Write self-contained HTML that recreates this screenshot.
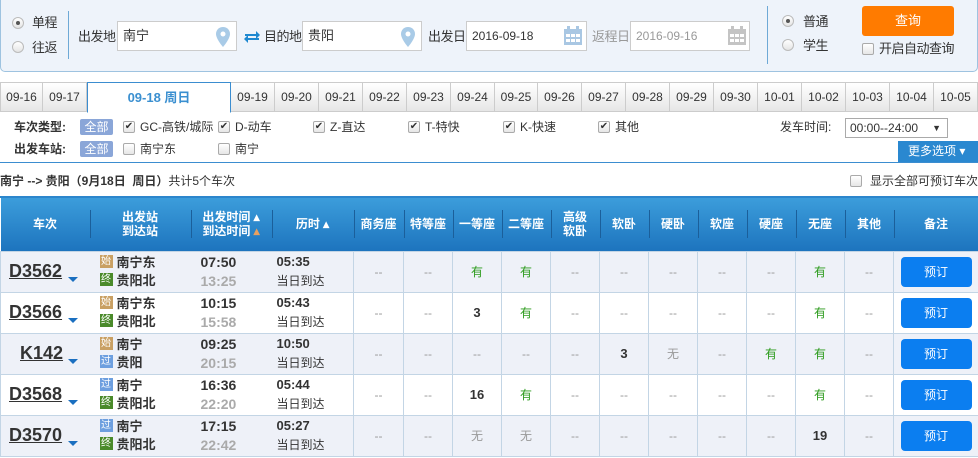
<!DOCTYPE html>
<html><head><meta charset="utf-8">
<style>
*{margin:0;padding:0;box-sizing:border-box}
body{width:978px;height:458px;overflow:hidden;background:#fff;font-family:"Liberation Sans","Noto Sans CJK SC",sans-serif;font-size:12px;color:#333;position:relative}
.a{position:absolute}
.top{left:0;top:0;width:978px;height:72px;background:#eef3fa;border:1px solid #9ec3e0;border-top:none;border-radius:0 0 5px 5px}
.radio{width:12px;height:12px;border-radius:50%;border:1px solid #bbb;background:linear-gradient(#fff,#e4e4e4)}
.radio.on::after{content:"";position:absolute;left:3px;top:3px;width:4px;height:4px;border-radius:50%;background:#555}
.inp{height:30px;border:1px solid #ccc;background:#fff;font-size:13px;line-height:28px;padding-left:5px}
.lbl{font-size:13px;color:#333;line-height:16px;letter-spacing:-0.5px}
.cb{width:12px;height:12px;border:1px solid #aaa;border-radius:2px;background:linear-gradient(#fff,#e6e6e6);font-size:10px;line-height:10px;text-align:center;color:#333}
.tabs{left:0;top:82px;height:30px;width:978px;border-bottom:1px solid #3b8dd0}
.tab{position:absolute;top:0;height:30px;border:1px solid #ccc;border-left:none;background:linear-gradient(#fff,#e6e6e6);font-size:12px;line-height:29px;text-align:center;color:#333}
.tab.act{background:#fff;border:1px solid #3b8dd0;border-bottom:1px solid #fff;height:31px;color:#3a8fd0;font-weight:bold;font-size:13px}
.badge{background:#8aa6d8;color:#fff;font-size:12px;width:33px;height:16px;line-height:16px;text-align:center;border-radius:2px}
.ft{font-size:12px;line-height:14px}
table{position:absolute;left:0;top:198px;width:978px;border-collapse:collapse;table-layout:fixed}
th{height:53px;background:linear-gradient(#3c9ddb,#1d74be);color:#fff;font-size:12px;font-weight:bold;line-height:14px;position:relative}
th+th::before{content:"";position:absolute;left:0;top:12px;height:28px;border-left:1px solid #1b5f9a}
td{height:41px;border:1px solid #c3d5e5;text-align:center;font-size:12px;color:#999}
td.n,td.st,td.tm{border-right:none}
td.st,td.tm,td.ls{border-left:none}
tr.b td{background:#eef1f8}
tr.w td{background:#fff}
td.n{text-align:left;padding-left:8px;position:relative}
.tn{font-size:18px;font-weight:bold;color:#333;text-decoration:underline;font-family:"Liberation Sans",sans-serif}
.arr{position:absolute;left:67px;top:25px;width:0;height:0;border-left:5px solid transparent;border-right:5px solid transparent;border-top:5px solid #1a6fc0}
.st{text-align:left;padding-left:10px;color:#333;font-weight:bold;font-size:13px;line-height:18px}
.ic{display:inline-block;width:13px;height:13px;font-size:10px;line-height:13px;text-align:center;color:#fff;margin-right:4px;vertical-align:-1px;font-weight:normal;overflow:hidden}
.s{background:#c9a063}.j{background:#4a8a2a}.g{background:#6d9fdf}
.tm{text-align:left;padding-left:10px;font-weight:bold;font-size:14px;line-height:19px;color:#333}
.tm span{color:#aaa;display:block}
.ls{text-align:left;padding-left:5px;font-size:12px;color:#333;line-height:19px}
.ls b{font-size:13px}
.y{color:#2a9a1a}
.k{color:#333;font-weight:bold;font-size:13px}
.btn{display:inline-block;width:71px;height:30px;background:#0b7ef0;border-radius:4px;color:#fff;line-height:30px;font-size:12px}
</style></head><body>
<div class="a top"></div>
<div class="a radio on" style="left:12px;top:17px"></div><div class="a lbl" style="left:32px;top:15px">单程</div>
<div class="a radio" style="left:12px;top:41px"></div><div class="a lbl" style="left:32px;top:40px">往返</div>
<div class="a" style="left:68px;top:11px;height:48px;border-left:1px solid #6ea9d6"></div>
<div class="a lbl" style="left:78px;top:29px">出发地</div>
<div class="a inp" style="left:117px;top:21px;width:120px">南宁</div>
<svg class="a" style="left:216px;top:27px" width="14" height="20" viewBox="0 0 14 20"><path d="M7 0C3 0 0 3 0 7c0 5 7 13 7 13s7-8 7-13C14 3 11 0 7 0z" fill="#a9cbe7"/><circle cx="7" cy="7" r="2.5" fill="#fff"/></svg>
<svg class="a" style="left:243px;top:29px" width="18" height="16" viewBox="0 0 18 16"><path d="M2 5h11V2l4 4-4 4V7H2z M16 11H5v3l-4-4 4-4v3h11z" fill="#1e88d0"/></svg>
<div class="a lbl" style="left:264px;top:29px">目的地</div>
<div class="a inp" style="left:302px;top:21px;width:120px">贵阳</div>
<svg class="a" style="left:401px;top:27px" width="14" height="20" viewBox="0 0 14 20"><path d="M7 0C3 0 0 3 0 7c0 5 7 13 7 13s7-8 7-13C14 3 11 0 7 0z" fill="#a9cbe7"/><circle cx="7" cy="7" r="2.5" fill="#fff"/></svg>
<div class="a lbl" style="left:428px;top:29px">出发日</div>
<div class="a inp" style="left:466px;top:21px;width:121px;font-size:12px">2016-09-18</div>
<svg class="a" style="left:563px;top:26px" width="20" height="20" viewBox="0 0 20 20"><rect x="1" y="3" width="18" height="16" fill="#a9c7e3"/><rect x="4" y="0" width="3" height="5" fill="#a9c7e3"/><rect x="13" y="0" width="3" height="5" fill="#a9c7e3"/><g fill="#fff"><rect x="3" y="8" width="4" height="3"/><rect x="8" y="8" width="4" height="3"/><rect x="13" y="8" width="4" height="3"/><rect x="3" y="13" width="4" height="3"/><rect x="8" y="13" width="4" height="3"/><rect x="13" y="13" width="4" height="3"/></g></svg>
<div class="a lbl" style="left:592px;top:29px;color:#999">返程日</div>
<div class="a inp" style="left:630px;top:21px;width:120px;font-size:12px;color:#999">2016-09-16</div>
<svg class="a" style="left:727px;top:26px" width="20" height="20" viewBox="0 0 20 20"><rect x="1" y="3" width="18" height="16" fill="#c4c4c4"/><rect x="4" y="0" width="3" height="5" fill="#c4c4c4"/><rect x="13" y="0" width="3" height="5" fill="#c4c4c4"/><g fill="#fff"><rect x="3" y="8" width="4" height="3"/><rect x="8" y="8" width="4" height="3"/><rect x="13" y="8" width="4" height="3"/><rect x="3" y="13" width="4" height="3"/><rect x="8" y="13" width="4" height="3"/><rect x="13" y="13" width="4" height="3"/></g></svg>
<div class="a" style="left:767px;top:6px;height:58px;border-left:1px solid #6ea9d6"></div>
<div class="a radio on" style="left:782px;top:15px"></div><div class="a lbl" style="left:803px;top:14px">普通</div>
<div class="a radio" style="left:782px;top:39px"></div><div class="a lbl" style="left:803px;top:38px">学生</div>
<div class="a" style="left:862px;top:6px;width:92px;height:30px;background:#ff7b00;border-radius:3px;color:#fff;font-size:13px;text-align:center;line-height:30px">查询</div>
<div class="a cb" style="left:862px;top:43px"></div><div class="a lbl" style="left:879px;top:41px">开启自动查询</div>

<div class="a tabs">
<div class="tab" style="left:0;width:43px;border-left:1px solid #ccc">09-16</div>
<div class="tab" style="left:43px;width:44px">09-17</div>
<div class="tab act" style="left:87px;width:144px">09-18 周日</div>
<div class="tab" style="left:231px;width:44px">09-19</div>
<div class="tab" style="left:275px;width:44px">09-20</div>
<div class="tab" style="left:319px;width:44px">09-21</div>
<div class="tab" style="left:363px;width:44px">09-22</div>
<div class="tab" style="left:407px;width:44px">09-23</div>
<div class="tab" style="left:451px;width:44px">09-24</div>
<div class="tab" style="left:495px;width:43px">09-25</div>
<div class="tab" style="left:538px;width:44px">09-26</div>
<div class="tab" style="left:582px;width:44px">09-27</div>
<div class="tab" style="left:626px;width:44px">09-28</div>
<div class="tab" style="left:670px;width:44px">09-29</div>
<div class="tab" style="left:714px;width:44px">09-30</div>
<div class="tab" style="left:758px;width:44px">10-01</div>
<div class="tab" style="left:802px;width:44px">10-02</div>
<div class="tab" style="left:846px;width:44px">10-03</div>
<div class="tab" style="left:890px;width:44px">10-04</div>
<div class="tab" style="left:934px;width:44px">10-05</div>
</div>

<div class="a ft" style="left:14px;top:120px;font-weight:bold">车次类型:</div>
<div class="a badge" style="left:80px;top:119px">全部</div>
<div class="a cb" style="left:123px;top:121px">✔</div><div class="a ft" style="left:140px;top:120px">GC-高铁/城际</div>
<div class="a cb" style="left:218px;top:121px">✔</div><div class="a ft" style="left:235px;top:120px">D-动车</div>
<div class="a cb" style="left:313px;top:121px">✔</div><div class="a ft" style="left:330px;top:120px">Z-直达</div>
<div class="a cb" style="left:408px;top:121px">✔</div><div class="a ft" style="left:425px;top:120px">T-特快</div>
<div class="a cb" style="left:503px;top:121px">✔</div><div class="a ft" style="left:520px;top:120px">K-快速</div>
<div class="a cb" style="left:598px;top:121px">✔</div><div class="a ft" style="left:615px;top:120px">其他</div>
<div class="a ft" style="left:780px;top:120px">发车时间:</div>
<div class="a" style="left:845px;top:118px;width:103px;height:20px;border:1px solid #aaa;background:#fff;font-size:12px;line-height:18px;padding-left:4px">00:00--24:00<span style="position:absolute;right:6px;font-size:9px">▼</span></div>
<div class="a ft" style="left:14px;top:142px;font-weight:bold">出发车站:</div>
<div class="a badge" style="left:80px;top:141px">全部</div>
<div class="a cb" style="left:123px;top:143px"></div><div class="a ft" style="left:140px;top:142px">南宁东</div>
<div class="a cb" style="left:218px;top:143px"></div><div class="a ft" style="left:235px;top:142px">南宁</div>
<div class="a" style="left:898px;top:141px;width:80px;height:21px;background:#2a88d0;color:#fff;font-size:12px;line-height:21px;padding-left:10px">更多选项 ▾</div>
<div class="a" style="left:0;top:162px;width:978px;border-top:1px solid #3b8dd0"></div>

<div class="a ft" style="left:0;top:174px;font-size:12px"><b>南宁 --&gt; 贵阳（9月18日&nbsp; 周日）</b>共计5个车次</div>
<div class="a cb" style="left:850px;top:175px"></div><div class="a ft" style="left:870px;top:174px">显示全部可预订车次</div>
<div class="a" style="left:0;top:196px;width:978px;border-top:2px solid #2c86cc"></div>

<table>
<colgroup><col style="width:89px"><col style="width:101px"><col style="width:81px"><col style="width:82px"><col style="width:50px"><col span="10" style="width:49px"><col style="width:85px"></colgroup>
<tr><th>车次</th><th>出发站<br>到达站</th><th>出发时间 ▴<br>到达时间 <span style="color:#e8a060">▴</span></th><th>历时 ▴</th><th>商务座</th><th>特等座</th><th>一等座</th><th>二等座</th><th>高级<br>软卧</th><th>软卧</th><th>硬卧</th><th>软座</th><th>硬座</th><th>无座</th><th>其他</th><th>备注</th></tr>
<tr class="b"><td class="n"><span class="tn">D3562</span><i class="arr"></i></td><td class="st"><span class="ic s">始</span>南宁东<br><span class="ic j">终</span>贵阳北</td><td class="tm">07:50<span>13:25</span></td><td class="ls"><b>05:35</b><br>当日到达</td><td>--</td><td>--</td><td class="y">有</td><td class="y">有</td><td>--</td><td>--</td><td>--</td><td>--</td><td>--</td><td class="y">有</td><td>--</td><td><span class="btn">预订</span></td></tr>
<tr class="w"><td class="n"><span class="tn">D3566</span><i class="arr"></i></td><td class="st"><span class="ic s">始</span>南宁东<br><span class="ic j">终</span>贵阳北</td><td class="tm">10:15<span>15:58</span></td><td class="ls"><b>05:43</b><br>当日到达</td><td>--</td><td>--</td><td class="k">3</td><td class="y">有</td><td>--</td><td>--</td><td>--</td><td>--</td><td>--</td><td class="y">有</td><td>--</td><td><span class="btn">预订</span></td></tr>
<tr class="b"><td class="n" style="padding-left:19px"><span class="tn">K142</span><i class="arr"></i></td><td class="st"><span class="ic s">始</span>南宁<br><span class="ic g">过</span>贵阳</td><td class="tm">09:25<span>20:15</span></td><td class="ls"><b>10:50</b><br>当日到达</td><td>--</td><td>--</td><td>--</td><td>--</td><td>--</td><td class="k">3</td><td>无</td><td>--</td><td class="y">有</td><td class="y">有</td><td>--</td><td><span class="btn">预订</span></td></tr>
<tr class="w"><td class="n"><span class="tn">D3568</span><i class="arr"></i></td><td class="st"><span class="ic g">过</span>南宁<br><span class="ic j">终</span>贵阳北</td><td class="tm">16:36<span>22:20</span></td><td class="ls"><b>05:44</b><br>当日到达</td><td>--</td><td>--</td><td class="k">16</td><td class="y">有</td><td>--</td><td>--</td><td>--</td><td>--</td><td>--</td><td class="y">有</td><td>--</td><td><span class="btn">预订</span></td></tr>
<tr class="b"><td class="n"><span class="tn">D3570</span><i class="arr"></i></td><td class="st"><span class="ic g">过</span>南宁<br><span class="ic j">终</span>贵阳北</td><td class="tm">17:15<span>22:42</span></td><td class="ls"><b>05:27</b><br>当日到达</td><td>--</td><td>--</td><td>无</td><td>无</td><td>--</td><td>--</td><td>--</td><td>--</td><td>--</td><td class="k">19</td><td>--</td><td><span class="btn">预订</span></td></tr>
</table>
</body></html>
